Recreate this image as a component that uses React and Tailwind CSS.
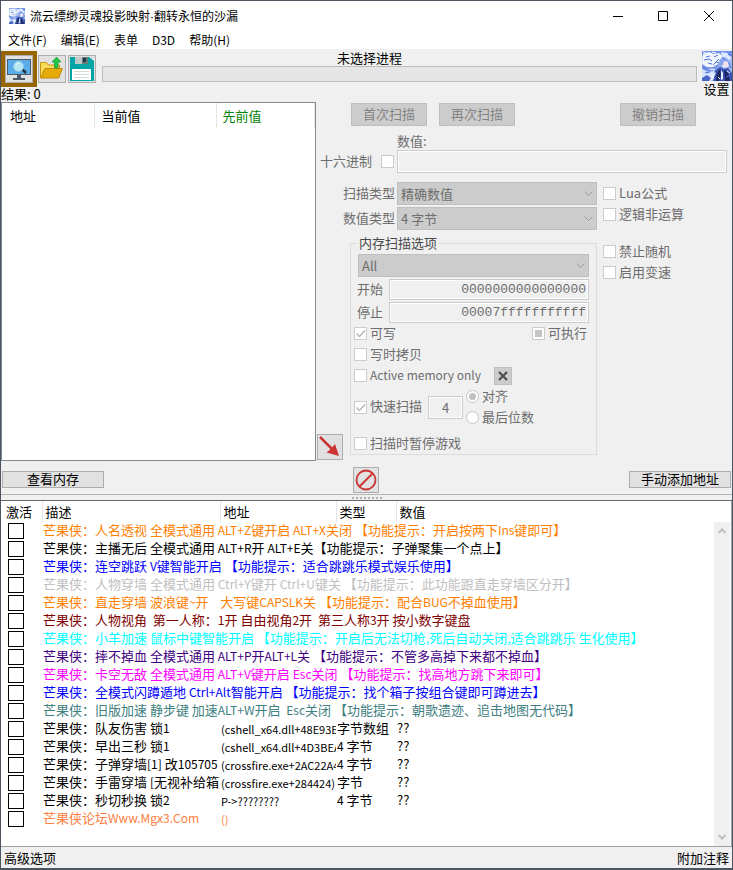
import React from 'react';
import clsx from 'clsx';

const menus = ['文件(F)', '编辑(E)', '表单', 'D3D', '帮助(H)'];

const entries = [
  { text: '芒果侠：人名透视 全模式通用 ALT+Z键开启 ALT+X关闭 【功能提示：开启按两下Ins键即可】', color: 'text-[#ff8000]' },
  { text: '芒果侠：主播无后 全模式通用 ALT+R开 ALT+E关【功能提示：子弹聚集一个点上】', color: 'text-black' },
  { text: '芒果侠：连空跳跃 V键智能开启 【功能提示：适合跳跳乐模式娱乐使用】', color: 'text-[#0000ff]' },
  { text: '芒果侠：人物穿墙 全模式通用 Ctrl+Y键开 Ctrl+U键关 【功能提示：此功能跟直走穿墙区分开】', color: 'text-[#c0c0c0]' },
  { text: '芒果侠：直走穿墙 波浪键~开    大写键CAPSLK关 【功能提示：配合BUG不掉血使用】', color: 'text-[#ff8000]' },
  { text: '芒果侠：人物视角  第一人称：1开 自由视角2开  第三人称3开 按小数字键盘', color: 'text-[#800000]' },
  { text: '芒果侠：小羊加速 鼠标中键智能开启 【功能提示：开启后无法切枪,死后自动关闭,适合跳跳乐 生化使用】', color: 'text-[#00ffff]' },
  { text: '芒果侠：摔不掉血 全模式通用 ALT+P开ALT+L关 【功能提示：不管多高掉下来都不掉血】', color: 'text-[#400080]' },
  { text: '芒果侠：卡空无敌 全模式通用 ALT+V键开启 Esc关闭 【功能提示：找高地方跳下来即可】', color: 'text-[#ff00ff]' },
  { text: '芒果侠：全模式闪蹲遁地 Ctrl+Alt智能开启 【功能提示：找个箱子按组合键即可蹲进去】', color: 'text-[#0000ff]' },
  { text: '芒果侠：旧版加速 静步键 加速ALT+W开启  Esc关闭 【功能提示：朝歌遗迹、追击地图无代码】', color: 'text-[#408080]' },
  { text: '芒果侠：队友伤害 锁1', address: '(cshell_x64.dll+48E93E', type: '字节数组', value: '??', color: 'text-black' },
  { text: '芒果侠：早出三秒 锁1', address: '(cshell_x64.dll+4D3BEA', type: '4 字节', value: '??', color: 'text-black' },
  { text: '芒果侠：子弹穿墙[1] 改105705', address: '(crossfire.exe+2AC22A4', type: '4 字节', value: '??', color: 'text-black' },
  { text: '芒果侠：手雷穿墙 [无视补给箱]', address: '(crossfire.exe+284424)', type: '字节', value: '??', color: 'text-black' },
  { text: '芒果侠：秒切秒换 锁2', address: 'P->????????', type: '4 字节', value: '??', color: 'text-black' },
  { text: '芒果侠论坛Www.Mgx3.Com', address: '()', type: '', value: '', color: 'text-[#ff8040]' }
];

// Latin runs are set one size smaller than the Chinese around them
const MixedText = ({ text }) =>
  text.split(/([!-~]+)/).map((part, index) =>
    index % 2 ? <span key={index} className="text-[12px]">{part}</span> : part
  );

const Portrait = ({ className }) => (
  <svg viewBox="0 0 30 30" className={className} preserveAspectRatio="none" aria-hidden="true">
    <rect width="30" height="30" fill="#a9c0f6" />
    <path d="M0 0h30v5l-6 1-5-3-7 2-5-3-7 3z" fill="#7391ea" />
    <path d="M1 3l6-2 5 2 5-1 4 4-3 6-6 4-7 1-5-3z" fill="#f1f6ff" />
    <path d="M19 1l6 1 4 4-2 5-4-3-3-3z" fill="#dfe9ff" />
    <path d="M0 13l5 3 6 0 5-3 3 5-6 5-6 1-7-3z" fill="#7c9bea" />
    <path d="M0 18l6 3 6-1 2 4-5 6H0z" fill="#d7e3ff" />
    <path d="M18 8l5-2 5 4 1 6-4 4-6-1-3-4z" fill="#8ba8ef" />
    <path d="M22 10l4 1 1 4-3 2-3-2z" fill="#f3e4ef" />
    <path d="M13 20l5-4 4 2 4-1 4 5v8H11z" fill="#3c55b4" />
    <path d="M15 22l3-4 1 6-2 6h-3zM22 19l4 3 2 8h-5z" fill="#1a2763" />
    <path d="M19 19l2 3 0 6-2 1zM8 25l6-4-3 8H6z" fill="#e9f0ff" />
    <path d="M0 27l5-3 4 3-2 3H0z" fill="#4866c8" />
    <path d="M2 9l5-1 3 2M4 6l4-1M12 6l4-2M11 14l6-6M3 22l5-1M26 3l3 2M24 26l5-2M1 16l4 2M14 11l3 1M6 12l4 1M20 6l3 3M27 12l2 5" stroke="#4c70d6" strokeWidth="1" fill="none" />
    <path d="M1 1l3 1M10 1l4 1M20 14l2 3M8 18l5 1M25 20l3 2M16 26l2 2" stroke="#f7faff" strokeWidth="1" fill="none" />
  </svg>
);

const MonitorIcon = () => (
  <svg viewBox="0 0 26 26" className="w-[26px] h-[26px]" aria-hidden="true">
    <rect x="1.500" y="3.500" width="23" height="15" fill="#5badea" stroke="#4d5c68" />
    <path d="M11 19h4v3h4v2H7v-2h4z" fill="#4d5c68" />
    <path d="M16 13l4 4" stroke="#22333d" strokeWidth="2.5" />
    <circle cx="12.500" cy="10.500" r="5" fill="#b6e6f2" stroke="#8ecbee" strokeWidth="1" />
    <path d="M10 9q1-2 3-2" stroke="#f4feff" strokeWidth="1" fill="none" />
  </svg>
);

const FolderIcon = () => (
  <svg viewBox="0 0 26 26" className="w-[26px] h-[26px]" aria-hidden="true">
    <path d="M1.500 21V6.500h6l2 2.500h11v12z" fill="#f6dc58" stroke="#c99612" />
    <path d="M6 12.500h17.500l-4 9.500H1.500z" fill="#e5ab08" stroke="#c18b0c" />
    <path d="M17.500 1l4.500 5h-3v6h-3.500V6h-2.500z" fill="#1fc744" stroke="#109a34" strokeWidth="0.7" />
  </svg>
);

const FloppyIcon = () => (
  <svg viewBox="0 0 26 26" className="w-[26px] h-[26px]" aria-hidden="true">
    <path d="M1 1h19l5 4v20H1z" fill="#02a5a7" />
    <path d="M6 1h13v7H6z" fill="#6b7a7e" />
    <path d="M6 1h7v7H6z" fill="#c0c9ca" />
    <rect x="14" y="2" width="3" height="4" fill="#183c42" />
    <rect x="3" y="13" width="19" height="11" fill="#fff" />
    <path d="M5 15.500h15M5 18.500h15M5 21.500h15" stroke="#d1dbdd" />
  </svg>
);

const Chevron = () => (
  <svg viewBox="0 0 9 6" className="pointer-events-none absolute right-[4px] top-[9px] w-[9px] h-[6px]" aria-hidden="true">
    <path d="M0.5 0.5l4 4 4-4" fill="none" stroke="#9b9b9b" />
  </svg>
);

const Select = ({ value, label, className }) => (
  <div className={clsx('relative', className)}>
    <select
      disabled
      aria-label={label}
      className="block h-[23px] w-full appearance-none border border-[#bfbfbf] bg-[#cccccc] px-[3px] text-[13px] leading-[20px] text-[#6d6d6d] opacity-100"
    >
      <option>{value}</option>
    </select>
    <Chevron />
  </div>
);

const CheckBox = ({ label, checked = false, mixed = false, className }) => (
  <label className={clsx('flex h-[21px] items-center gap-[3px] whitespace-nowrap text-[#6d6d6d]', className)}>
    <span className="relative block h-[13px] w-[13px] shrink-0">
      <input
        type="checkbox"
        disabled
        defaultChecked={checked}
        className="block h-[13px] w-[13px] appearance-none border border-[#cccccc] bg-white"
      />
      {checked && (
        <svg viewBox="0 0 13 13" className="pointer-events-none absolute inset-0" aria-hidden="true">
          <path d="M2.5 6.5l3 3 5.5-6" fill="none" stroke="#b5b5b5" strokeWidth="1.3" />
        </svg>
      )}
      {mixed && <span className="pointer-events-none absolute inset-[3px] bg-[#c4c4c4]"></span>}
    </span>
    <span className="pb-[2px]">{label}</span>
  </label>
);

const Radio = ({ label, checked = false }) => (
  <label className="flex h-[21px] items-center gap-[3px] whitespace-nowrap">
    <span className="relative block h-[13px] w-[13px] shrink-0">
      <input
        type="radio"
        name="alignment"
        disabled
        defaultChecked={checked}
        className="block h-[13px] w-[13px] appearance-none rounded-full border border-[#c4c4c4] bg-white"
      />
      {checked && <span className="pointer-events-none absolute inset-[3px] rounded-full bg-[#c0c0c0]"></span>}
    </span>
    <span className="pb-[2px]">{label}</span>
  </label>
);

const AddressInput = ({ label, value }) => (
  <label className="mt-[2px] flex items-center justify-between">
    <span className="-ml-px pb-[2px]">{label}</span>
    <input
      disabled
      defaultValue={value}
      className="h-[21px] w-[200px] border border-[#cccccc] px-[2px] text-right font-['Liberation_Mono',monospace] text-[13px] outline-1 -outline-offset-2 outline-white"
    />
  </label>
);

const DisabledButton = ({ children, className }) => (
  <button
    disabled
    className={clsx('h-[23px] w-[76px] border border-[#bfbfbf] bg-[#cccccc] pb-[2px] leading-[18px] text-[#838383]', className)}
  >
    {children}
  </button>
);

const TitleBar = () => (
  <header className="bg-white text-[12px]">
    <div className="flex h-[30px] items-center pl-2">
      <Portrait className="h-4 w-4" />
      <h1 className="ml-[5px] whitespace-nowrap">
        流云缥缈灵魂投影映射<span className="font-['Liberation_Sans',sans-serif]">·</span>翻转永恒的沙漏
      </h1>
      <div className="ml-auto flex h-full">
        <button aria-label="最小化" className="flex w-[45px] items-center justify-center">
          <svg viewBox="0 0 10 10" className="w-[10px] h-[10px]"><path d="M0 5.5h10" stroke="#000" /></svg>
        </button>
        <button aria-label="最大化" className="flex w-[46px] items-center justify-center">
          <svg viewBox="0 0 10 10" className="w-[10px] h-[10px]"><path d="M.5.5h9v9h-9z" stroke="#000" fill="none" /></svg>
        </button>
        <button aria-label="关闭" className="flex w-[46px] items-center justify-center">
          <svg viewBox="0 0 10 10" className="w-[10px] h-[10px]"><path d="M0 0l10 10M10 0L0 10" stroke="#000" /></svg>
        </button>
      </div>
    </div>
    <nav className="flex h-[18px] gap-[14px] pl-[7px]">
      {menus.map((menu) => (
        <button key={menu} className="whitespace-nowrap leading-[18px]">{menu}</button>
      ))}
    </nav>
  </header>
);

const Toolbar = () => (
  <div className="flex h-[53px]">
    <div className="flex flex-col">
      <div className="flex pt-[2px]">
        <button aria-label="选择进程" className="h-[36px] w-[36px] border-4 border-[#966400]">
          <span className="flex h-[28px] w-[28px] items-center justify-center border border-[#adadad] bg-[#e1e1e1]">
            <MonitorIcon />
          </span>
        </button>
        <button aria-label="打开" className="mt-1 ml-px flex h-[28px] w-[28px] items-center justify-center border border-[#adadad] bg-[#e1e1e1]">
          <FolderIcon />
        </button>
        <button aria-label="保存" className="mt-1 ml-[2px] flex h-[28px] w-[28px] items-center justify-center border border-[#adadad] bg-[#e1e1e1]">
          <FloppyIcon />
        </button>
      </div>
      <p className="leading-[13px]">结果: 0</p>
    </div>
    <div className="ml-[6px] flex-1">
      <p className="h-[17px] pr-[60px] text-center leading-[18px]">未选择进程</p>
      <div className="h-[16px] border border-[#bcbcbc] bg-[#e6e6e6]"></div>
    </div>
    <button className="ml-1 flex w-[31px] flex-col items-center pt-[2px]">
      <Portrait className="h-[30px] w-[30px] shrink-0" />
      <span className="whitespace-nowrap leading-[16px]">设置</span>
    </button>
  </div>
);

const ResultList = () => (
  <section className="w-[315px] shrink-0 border border-[#828790] bg-white">
    <table className="w-full table-fixed">
      <thead>
        <tr className="h-[25px] text-left">
          <th className="w-[92px] border-r border-[#e5e5e5] pl-2 font-normal">地址</th>
          <th className="w-[122px] border-r border-[#e5e5e5] pl-[7px] font-normal">当前值</th>
          <th className="border-r border-[#e5e5e5] pl-[6px] font-normal text-[#008000]">先前值</th>
        </tr>
      </thead>
    </table>
  </section>
);

const MemoryOptions = () => (
  <div className="flex flex-col border border-[#dcdcdc] px-[7px]">
    <div className="-mt-[9px] -ml-px self-start bg-[#f0f0f0] px-[2px] pb-[2px] leading-[16px] text-[#4a4a4a]">内存扫描选项</div>
    <Select label="内存区域" value="All" className="mt-px" />
    <AddressInput label="开始" value="0000000000000000" />
    <AddressInput label="停止" value="00007fffffffffff" />
    <div className="-ml-1 flex justify-between pr-[2px]">
      <CheckBox label="可写" checked />
      <CheckBox label="可执行" mixed />
    </div>
    <CheckBox label="写时拷贝" className="-ml-1" />
    <div className="-ml-1 flex items-center">
      <CheckBox label={<span className="text-[12px]">Active memory only</span>} className="w-[140px]" />
      <button disabled aria-label="清除" className="flex h-[18px] w-[18px] items-center justify-center border border-[#bfbfbf] bg-[#cccccc]">
        <svg viewBox="0 0 12 12" className="w-[12px] h-[12px]"><path d="M2 2l8 8M10 2l-8 8" stroke="#4d4d4d" strokeWidth="2.2" /></svg>
      </button>
    </div>
    <div className="-ml-1 flex h-[42px] items-center">
      <CheckBox label="快速扫描" checked className="w-[74px]" />
      <input
        disabled
        aria-label="对齐值"
        defaultValue="4"
        className="h-[23px] w-[35px] border border-[#cccccc] text-center outline-1 -outline-offset-2 outline-white"
      />
      <div className="ml-[3px] flex flex-col">
        <Radio label="对齐" checked />
        <Radio label="最后位数" />
      </div>
    </div>
    <CheckBox label="扫描时暂停游戏" className="mt-[5px] -ml-1" />
  </div>
);

const ScanPanel = () => (
  <section className="flex min-w-0 flex-1 flex-col pb-[6px] text-[#6d6d6d]">
    <div className="flex gap-3 pt-px pr-[36px] pl-[35px]">
      <DisabledButton>首次扫描</DisabledButton>
      <DisabledButton>再次扫描</DisabledButton>
      <DisabledButton className="ml-auto">撤销扫描</DisabledButton>
    </div>
    <label htmlFor="scan-value" className="mt-2 pb-[2px] pl-[81px] leading-[14px]">数值:</label>
    <div className="flex items-center pr-[5px] pl-[4px]">
      <label htmlFor="hex" className="w-[61px] whitespace-nowrap pb-[2px]">十六进制</label>
      <input id="hex" type="checkbox" disabled className="h-[13px] w-[13px] appearance-none border border-[#cccccc] bg-white" />
      <input
        id="scan-value"
        disabled
        className="ml-[3px] h-[23px] min-w-0 flex-1 border border-[#cccccc] px-1 outline-1 -outline-offset-2 outline-white"
      />
    </div>
    <div className="mt-[9px] flex gap-[6px]">
      <div className="flex w-[281px] shrink-0 flex-col gap-[2px]">
        <div className="flex items-center justify-between pl-[27px]">
          <span className="pb-[2px]">扫描类型</span>
          <Select label="扫描类型" value="精确数值" className="w-[200px]" />
        </div>
        <div className="flex items-center justify-between pl-[27px]">
          <span className="pb-[2px]">数值类型</span>
          <Select label="数值类型" value="4 字节" className="w-[200px]" />
        </div>
      </div>
      <div className="pt-px">
        <CheckBox label="Lua公式" />
        <CheckBox label="逻辑非运算" />
      </div>
    </div>
    <div className="mt-[13px] flex">
      <button aria-label="复制到列表" className="ml-px -mb-[5px] flex h-[26px] w-[26px] items-center justify-center self-end border border-[#adadad] bg-[#e1e1e1]">
        <svg viewBox="0 0 24 24" className="w-[24px] h-[24px]">
          <path d="M2 2l12 12" stroke="#cd3333" strokeWidth="2.5" />
          <path d="M21 21l-4-12-2.500 3-3.500 3.500-2.500 2z" fill="#cd3333" />
        </svg>
      </button>
      <div className="ml-[7px] w-[247px] shrink-0">
        <MemoryOptions />
      </div>
      <div className="ml-[6px] -mt-[2px]">
        <CheckBox label="禁止随机" />
        <CheckBox label="启用变速" />
      </div>
    </div>
  </section>
);

const PlainButton = ({ children }) => (
  <button className="h-[17px] w-[102px] border border-[#adadad] bg-[#e1e1e1] pb-[2px] leading-[13px] whitespace-nowrap">{children}</button>
);

const AddressList = () => (
  <section className="flex flex-1 border-r border-b border-[#a0a0a0] bg-white">
    <div className="min-w-0 flex-1 overflow-hidden">
      <table className="w-full table-fixed">
        <colgroup>
          <col className="w-[41px]" />
          <col className="w-[178px]" />
          <col className="w-[116px]" />
          <col className="w-[60px]" />
          <col />
        </colgroup>
        <thead>
          <tr className="h-[21px] text-left">
            <th className="border-r border-[#e5e5e5] pl-[5px] font-normal">激活</th>
            <th className="border-r border-[#e5e5e5] pl-[3px] font-normal">描述</th>
            <th className="border-r border-[#e5e5e5] pl-[3px] font-normal">地址</th>
            <th className="border-r border-[#e5e5e5] pl-[3px] font-normal">类型</th>
            <th className="pl-[3px] font-normal">数值</th>
          </tr>
        </thead>
        <tbody>
          {entries.map((entry) => (
            <tr key={entry.text} className={clsx('h-[18px] align-top leading-[16px] whitespace-pre', entry.color)}>
              <td className="py-px pl-[7px]">
                <input
                  type="checkbox"
                  aria-label={entry.text}
                  className="block h-[16px] w-[16px] appearance-none border border-black bg-white"
                />
              </td>
              {entry.address ? (
                <>
                  <td className="overflow-hidden pl-px"><MixedText text={entry.text} /></td>
                  <td className="overflow-hidden pt-px pl-px text-[11px]">{entry.address}</td>
                  <td className="pl-px"><MixedText text={entry.type} /></td>
                  <td className="pl-px">{entry.value}</td>
                </>
              ) : (
                <td colSpan={4} className="pl-px"><MixedText text={entry.text} /></td>
              )}
            </tr>
          ))}
        </tbody>
      </table>
    </div>
    <div className="mt-[21px] mr-px flex w-[16px] flex-col items-center justify-between bg-[#f0f0f0] py-[6px]">
      <svg viewBox="0 0 8 6" className="w-[8px] h-[6px]"><path d="M.5 5l3.500-3.500 3.500 3.500" fill="none" stroke="#bfbfbf" strokeWidth="2" /></svg>
      <svg viewBox="0 0 8 6" className="w-[8px] h-[6px]"><path d="M.5 1l3.500 3.500 3.500-3.500" fill="none" stroke="#bfbfbf" strokeWidth="2" /></svg>
    </div>
  </section>
);

const App = () => {
  return (
    <div className="flex min-h-screen flex-col border border-b-2 border-[#4b5661] bg-[#f0f0f0] font-['Noto_Sans_CJK_SC',sans-serif] text-[13px] leading-[18px] text-black">
      <TitleBar />
      <Toolbar />
      <main className="flex">
        <ResultList />
        <ScanPanel />
      </main>

      <div className="flex h-[33px] items-center justify-between px-px pt-[4px]">
        <PlainButton>查看内存</PlainButton>
        <button aria-label="停止" className="mr-auto ml-[249px] flex h-[26px] w-[26px] items-center justify-center border border-[#adadad] bg-[#e1e1e1]">
          <svg viewBox="0 0 24 24" className="w-[24px] h-[24px]">
            <circle cx="12" cy="12" r="9.500" fill="none" stroke="#cd3333" strokeWidth="1.8" />
            <path d="M5.500 18.500L18.500 5.500" stroke="#cd3333" strokeWidth="1.8" />
          </svg>
        </button>
        <PlainButton>手动添加地址</PlainButton>
      </div>

      {/* Splitter */}
      <div className="flex h-[7px] items-center justify-center border-t border-b border-t-[#b4b4b4] border-b-[#696969]">
        <div className="h-[2px] w-[30px] border-t-2 border-dotted border-[#b0b0b0]"></div>
      </div>

      <AddressList />
      <footer className="flex h-[21px] justify-between px-[3px] leading-[18px]">
        <button>高级选项</button>
        <button>附加注释</button>
      </footer>
    </div>
  );
};

export default App;
